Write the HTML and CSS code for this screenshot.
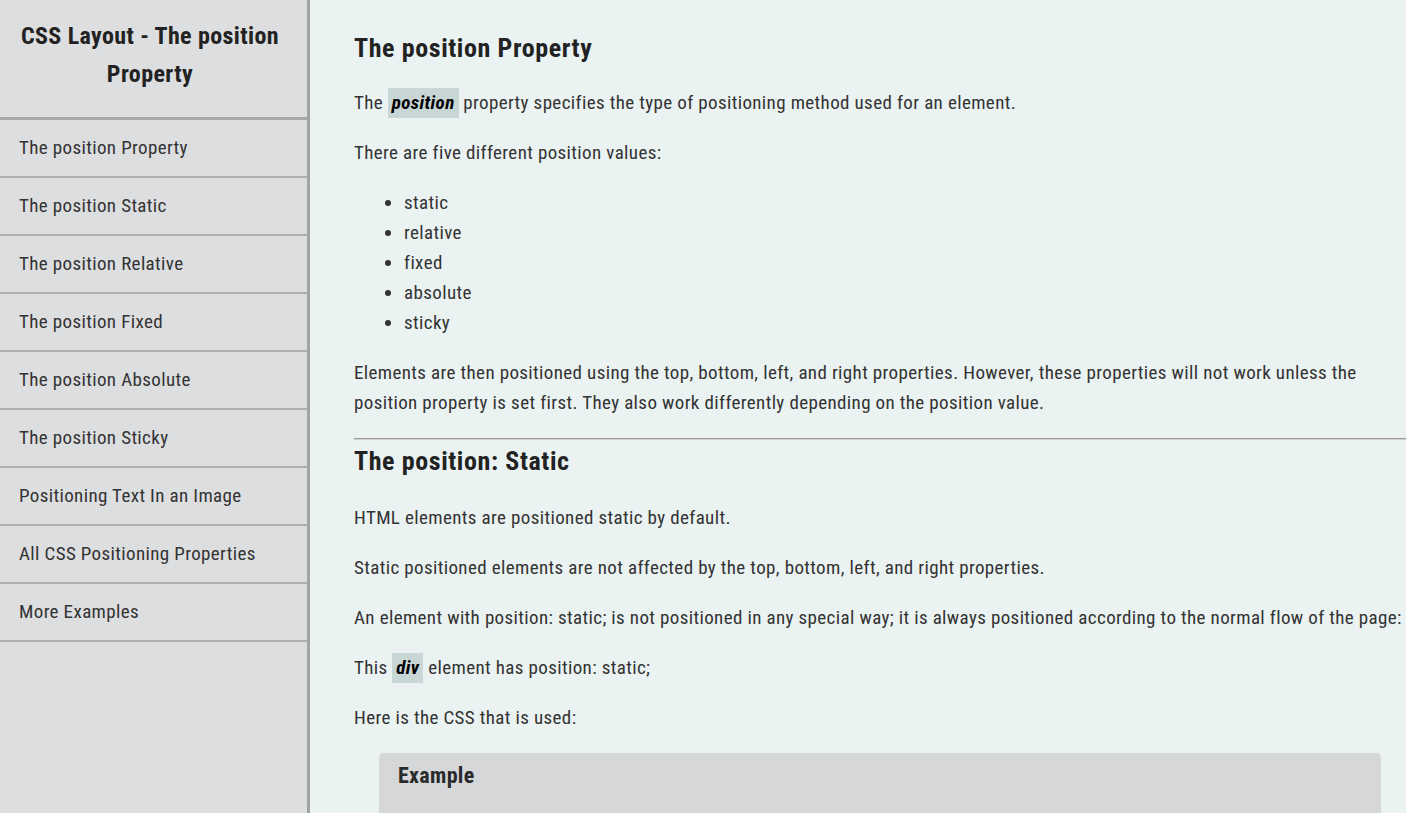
FILE: index.html
```html
<!DOCTYPE html>
<html lang="en">
<head>
<meta charset="utf-8">
<title>CSS Layout - The position Property</title>
<link rel="stylesheet" href="styles.css">
</head>
<body>
<div class="page">
  <aside class="sidebar">
    <div class="side-title">CSS Layout - The position Property</div>
    <nav class="side-nav">
      <a class="nav-item" href="#">The position Property</a>
      <a class="nav-item" href="#">The position Static</a>
      <a class="nav-item" href="#">The position Relative</a>
      <a class="nav-item" href="#">The position Fixed</a>
      <a class="nav-item" href="#">The position Absolute</a>
      <a class="nav-item" href="#">The position Sticky</a>
      <a class="nav-item" href="#">Positioning Text In an Image</a>
      <a class="nav-item" href="#">All CSS Positioning Properties</a>
      <a class="nav-item" href="#">More Examples</a>
    </nav>
  </aside>
  <main class="content">
    <h1 class="title">The position Property</h1>
    <p class="para">The <span class="kw">position</span> property specifies the type of positioning method used for an element.</p>
    <p class="para">There are five different position values:</p>
    <ul class="list">
      <li>static</li>
      <li>relative</li>
      <li>fixed</li>
      <li>absolute</li>
      <li>sticky</li>
    </ul>
    <p class="para">Elements are then positioned using the top, bottom, left, and right properties. However, these properties will not work unless the position property is set first. They also work differently depending on the position value.</p>
    <hr class="rule">
    <h2 class="title sub">The position: Static</h2>
    <p class="para">HTML elements are positioned static by default.</p>
    <p class="para">Static positioned elements are not affected by the top, bottom, left, and right properties.</p>
    <p class="para">An element with position: static; is not positioned in any special way; it is always positioned according to the normal flow of the page:</p>
    <p class="para">This <span class="kw">div</span> element has position: static;</p>
    <p class="para">Here is the CSS that is used:</p>
    <div class="example">
      <h3 class="ex-title">Example</h3>
    </div>
  </main>
</div>
</body>
</html>
```
FILE: styles.css
```css
html, body {
  margin: 0;
  padding: 0;
  height: 100%;
}
body {
  font-family: "Roboto Condensed", Roboto, "Liberation Sans", sans-serif;
  font-size: 19px;
  letter-spacing: 0.37px;
  color: #333;
  background: #eaf2f2;
  overflow: hidden;
}
.page {
  display: flex;
  min-height: 100%;
}
.sidebar {
  flex: 0 0 307px;
  background: #dddee0;
  border-right: 3px solid #a1a4a5;
  min-height: 813px;
}
.side-title {
  font-size: 24px;
  font-weight: 700;
  letter-spacing: 0.4px;
  line-height: 38px;
  text-align: center;
  color: #222;
  padding: 17px 17px 24px 10px;
  border-bottom: 3px solid #a6a8a9;
}
.side-nav {
  display: flex;
  flex-direction: column;
}
.nav-item {
  display: block;
  height: 56px;
  line-height: 56px;
  padding-left: 19px;
  color: #333;
  text-decoration: none;
  border-bottom: 2px solid #aeafb0;
}
.content {
  flex: 1;
  padding: 30px 0 0 44px;
  min-width: 0;
}
.title {
  font-size: 26px;
  font-weight: 700;
  letter-spacing: 0.6px;
  line-height: 36px;
  color: #222;
  margin: 0 0 22px;
}
.sub {
  margin: 3px 0 24px;
}
.para {
  margin: 0 0 20px;
  line-height: 30px;
}
.kw {
  display: inline-block;
  background: #c9d6d6;
  color: #000;
  font-weight: 700;
  font-style: italic;
  padding: 0 4px;
  margin: 0;
  line-height: 30px;
}
.list {
  margin: 0 0 20px;
  padding-left: 50px;
  line-height: 30px;
}
.rule {
  border: 0;
  border-top: 1px solid #999;
  margin: 0;
  height: 1px;
  background: #d0d0d0;
}
.example {
  margin: 0 25px 0 25px;
  background: #d6d7d9;
  border-radius: 5px 5px 0 0;
  padding: 8px 19px 40px;
}
.ex-title {
  margin: 0;
  font-size: 22px;
  letter-spacing: 0.3px;
  line-height: 30px;
  font-weight: 700;
  color: #2a2a2a;
}
```
